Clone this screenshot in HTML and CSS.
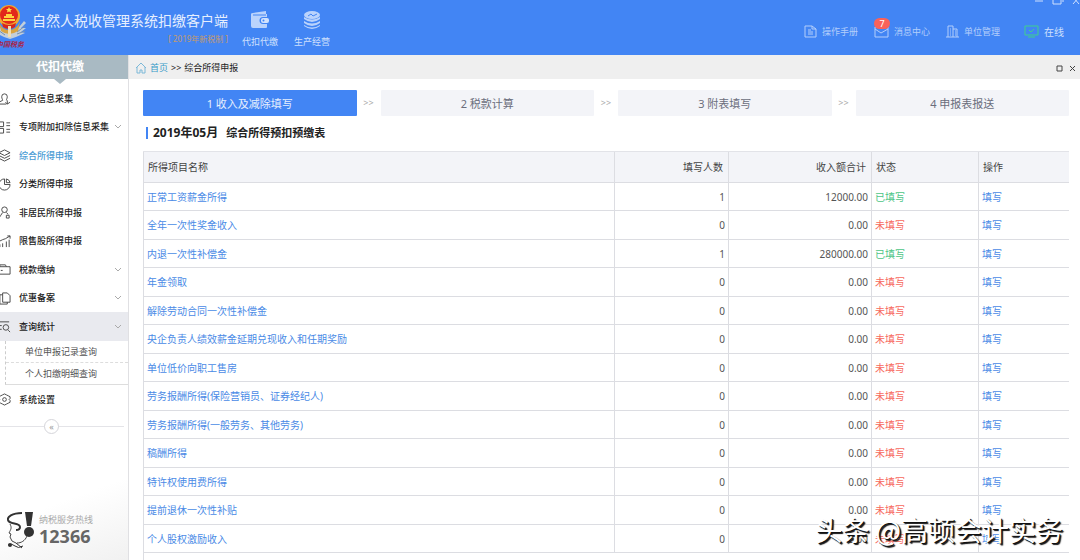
FILE: index.html
```html
<!DOCTYPE html>
<html lang="zh-CN">
<head>
    <meta charset="UTF-8">
    <title>自然人税收管理系统扣缴客户端</title>
    <link rel="stylesheet" href="styles.css">
</head>
<body>
    <header class="topbar">
        <div class="brand">
            <div class="logo">
                <svg width="28" height="37" viewBox="0 0 28 37">
                    <path d="M-2 22 L4 29 L15 29 L24 18 L26 20 L21 25 L26 25 L21 29 L25 30 L16 34 L10 36 L4 34 L-4 30Z" fill="#c3cfda"/>
                    <path d="M17 29l8-6M17 31l8-3M-2 27l7 5" stroke="#7690b0" stroke-width="1"/>
                    <path d="M-1 19q3 8 10 8t11-8l-2 9q-9 6-17 0z" fill="#d9a441"/>
                    <circle cx="9" cy="13" r="11" fill="#f0a830"/>
                    <circle cx="9" cy="12" r="9" fill="#e2281b"/>
                    <path d="M9 4l1 2h2l-1.500 1.500.5 2-2-1-2 1 .5-2L6 6h2z" fill="#ffe04a"/>
                    <path d="M4 15h10v-2h-2v-2H6v2H4zM3 16h12v2H3z" fill="#ffd23f"/>
                    <path d="M2 20q7 4 14 0l-1 4q-6 4-12 0z" fill="#d8251c"/>
                    <path d="M8 23h3v11H8z" fill="#f1ddb0"/>
                </svg>
                <span class="logo-text">中国税务</span>
            </div>
            <div class="brand-name">
                <h1>自然人税收管理系统扣缴客户端</h1>
                <span class="edition">[ 2019年新税制 ]</span>
            </div>
        </div>
        <nav class="modules">
            <a class="module" href="#">
                <svg width="20" height="20" viewBox="0 0 20 20">
                    <path d="M3 3l13-2v3h1v3h-4a3 3 0 0 0 0 7h4v3q0 1-1 1H3q-2 0-2-2V4q0-1 2-1z" fill="#bad3fc"/>
                    <path d="M3 5h13" stroke="#4285f4"/>
                    <rect x="11" y="8" width="8" height="5" rx="2" fill="#d3e3fd"/>
                    <circle cx="13.500" cy="10.500" r="1" fill="#4285f4"/>
                </svg>
                代扣代缴
            </a>
            <a class="module" href="#">
                <svg width="20" height="20" viewBox="0 0 20 20" fill="#bad3fc">
                    <ellipse cx="10" cy="5" rx="8" ry="4"/>
                    <path d="M2 7q8 5 16 0v2q-8 6-16 0zM2 11q8 5 16 0v2q-8 6-16 0zM2 15q8 5 16 0v1q-8 6-16 0z"/>
                    <path d="M6 6l3-2 2 2 4-2" fill="none" stroke="#4285f4"/>
                </svg>
                生产经营
            </a>
        </nav>
        <div class="window-controls">
            <button type="button" aria-label="最小化"><svg width="10" height="8" viewBox="0 0 10 8"><path d="M1 4h8"/></svg></button>
            <button type="button" aria-label="还原"><svg width="12" height="8" viewBox="0 0 12 8"><path d="M1 2h8v5H1zM3 0h8v5"/></svg></button>
            <button type="button" aria-label="关闭"><svg width="8" height="8" viewBox="0 0 8 8"><path d="M1 0l6 7M7 0L1 7"/></svg></button>
        </div>
        <nav class="tools">
            <a href="#">
                <svg width="13" height="13" viewBox="0 0 13 13"><path d="M1 1h7l4 3v8H1zM8 1v3h4M4 5h3M4 7h5M4 9h5"/></svg>
                操作手册
            </a>
            <a class="messages" href="#">
                <svg width="15" height="13" viewBox="0 0 15 13"><path d="M1 2h13v10H1zM1 4l6 4 7-4"/></svg>
                消息中心
                <span class="badge">7</span>
            </a>
            <a href="#">
                <svg width="13" height="13" viewBox="0 0 13 13"><path d="M2 12V1h5v11M7 4h4v8M0 12h13M4 4h1M4 6h1M4 8h1M9 6h1M9 8h1M9 10h1M4 10h1"/></svg>
                单位管理
            </a>
            <a class="online" href="#">
                <svg width="15" height="13" viewBox="0 0 15 13"><path d="M1 1h13v9H1zM4 12h7M5 5l2 2 3-3"/></svg>
                在线
            </a>
        </nav>
    </header>

    <div class="layout">
        <aside class="sidebar">
            <h2 class="sidebar-title">代扣代缴</h2>
            <nav class="menu">
                <a class="menu-item" href="#">
                    <svg class="icon" viewBox="0 0 14 14"><path d="M4 5a3 3 0 0 1 6 0c0 2-1 3-1 4M4 5c0 2 1 3 1 4l-4 2v2h8M10 9v4M8 11l2 2 3-2"/></svg>
                    人员信息采集
                </a>
                <a class="menu-item" href="#">
                    <svg class="icon" viewBox="0 0 14 14"><path d="M1 1h5v5H1zM1 8h5v5H1zM9 2h4M9 5h4M9 9h4M9 12h4"/></svg>
                    专项附加扣除信息采集
                    <svg class="chevron" viewBox="0 0 8 8"><path d="M1 2l3 3 3-3"/></svg>
                </a>
                <a class="menu-item active" href="#">
                    <svg class="icon" viewBox="0 0 14 14"><path d="M7 1l6 3-6 3-6-3zM1 7l6 3 6-3M1 10l6 3 6-3"/></svg>
                    综合所得申报
                </a>
                <a class="menu-item" href="#">
                    <svg class="icon" viewBox="0 0 14 14"><path d="M7 1a6 6 0 1 0 6 6H7zM9 1v4h4a5 5 0 0 0-4-4z"/></svg>
                    分类所得申报
                </a>
                <a class="menu-item" href="#">
                    <svg class="icon" viewBox="0 0 14 14"><circle cx="7" cy="4" r="3"/><path d="M5 7l-2 3-2 3M9 7l2 2M9 10h3v3H9z"/></svg>
                    非居民所得申报
                </a>
                <a class="menu-item" href="#">
                    <svg class="icon" viewBox="0 0 14 14"><path d="M2 13v-3M5 13V9M9 13V7M12 13V5M1 7l4-2 3-1 5-3M10 1h3v3"/></svg>
                    限售股所得申报
                </a>
                <a class="menu-item" href="#">
                    <svg class="icon" viewBox="0 0 14 14"><path d="M1 4h12v8H1zM2 4V2h6l1 2M3 8h2"/></svg>
                    税款缴纳
                    <svg class="chevron" viewBox="0 0 8 8"><path d="M1 2l3 3 3-3"/></svg>
                </a>
                <a class="menu-item" href="#">
                    <svg class="icon" viewBox="0 0 14 14"><path d="M5 1h5l3 3v7H5zM5 3H2v10h8v-2"/></svg>
                    优惠备案
                    <svg class="chevron" viewBox="0 0 8 8"><path d="M1 2l3 3 3-3"/></svg>
                </a>
                <a class="menu-item open" href="#">
                    <svg class="icon" viewBox="0 0 14 14"><path d="M1 2h11M1 6h3M1 10h3M11 11l2 2"/><circle cx="8.500" cy="8" r="3"/></svg>
                    查询统计
                    <svg class="chevron" viewBox="0 0 8 8"><path d="M1 2l3 3 3-3"/></svg>
                </a>
                <div class="submenu">
                    <a href="#">单位申报记录查询</a>
                    <a href="#">个人扣缴明细查询</a>
                </div>
                <a class="menu-item" href="#">
                    <svg class="icon" viewBox="0 0 14 14"><path d="M5 2l2-1 2 1 2 1 2 1v2l-1 1 1 1v2l-2 1-2 1-2 1-2-1-2-1-2-1V8l1-1-1-1V4l2-1z"/><circle cx="7" cy="7" r="2"/></svg>
                    系统设置
                </a>
            </nav>
            <div class="collapse">
                <button type="button" aria-label="收起菜单">«</button>
            </div>
            <div class="hotline">
                <svg width="28" height="38" viewBox="0 0 28 38">
                    <path d="M18 1h8l-2 14h-4z" fill="#333"/>
                    <circle cx="22" cy="21" r="5" fill="#333"/>
                    <path d="M15 2C5 2 0 6 1 9c1 5 12 2 12 7 0 2-2 3-4 3" fill="none" stroke="#333" stroke-width="2"/>
                    <path d="M3 13c2 4 1 5-1 9l2 1-1 3 2 4 4 2M20 25c-2 5-6 7-10 7" fill="none" stroke="#444" stroke-width="1"/>
                    <path d="M1 34q4-2 7 1t8 0M9 32l6 5" fill="none" stroke="#333" stroke-width="1"/>
                    <circle cx="3" cy="34" r="2" fill="#333"/>
                </svg>
                <div>
                    <div class="hotline-label">纳税服务热线</div>
                    <div class="hotline-number">12366</div>
                </div>
            </div>
        </aside>

        <div class="content">
            <div class="crumbs">
                <svg width="12" height="12" viewBox="0 0 12 12"><path d="M1 6l5-5 5 5M2 5v6h3V8h2v3h3V5" fill="none" stroke="#7db9d8"/></svg>
                <a href="#">首页</a>
                <span>&gt;&gt;</span>
                <span>综合所得申报</span>
                <div class="tab-controls">
                    <button type="button" aria-label="最大化"><svg width="7" height="7" viewBox="0 0 7 7"><path d="M1 1h5v5H1z"/></svg></button>
                    <button type="button" aria-label="关闭页面"><svg width="7" height="7" viewBox="0 0 7 7"><path d="M1 1l5 5M6 1L1 6"/></svg></button>
                </div>
            </div>

            <main class="main">
                <div class="steps">
                    <button type="button" class="step current">1 收入及减除填写</button>
                    <span class="arrow">&gt;&gt;</span>
                    <button type="button" class="step">2 税款计算</button>
                    <span class="arrow">&gt;&gt;</span>
                    <button type="button" class="step">3 附表填写</button>
                    <span class="arrow">&gt;&gt;</span>
                    <button type="button" class="step">4 申报表报送</button>
                </div>

                <h3 class="report-title"><span class="period">2019年05月</span><span>综合所得预扣预缴表</span></h3>

                <table class="report">
                    <thead>
                        <tr>
                            <th>所得项目名称</th>
                            <th class="col-count">填写人数</th>
                            <th class="col-sum">收入额合计</th>
                            <th class="col-status">状态</th>
                            <th class="col-action">操作</th>
                        </tr>
                    </thead>
                    <tbody>
                        <tr><td><a href="#">正常工资薪金所得</a></td><td>1</td><td>12000.00</td><td class="done">已填写</td><td><a href="#">填写</a></td></tr>
                        <tr><td><a href="#">全年一次性奖金收入</a></td><td>0</td><td>0.00</td><td class="todo">未填写</td><td><a href="#">填写</a></td></tr>
                        <tr><td><a href="#">内退一次性补偿金</a></td><td>1</td><td>280000.00</td><td class="done">已填写</td><td><a href="#">填写</a></td></tr>
                        <tr><td><a href="#">年金领取</a></td><td>0</td><td>0.00</td><td class="todo">未填写</td><td><a href="#">填写</a></td></tr>
                        <tr><td><a href="#">解除劳动合同一次性补偿金</a></td><td>0</td><td>0.00</td><td class="todo">未填写</td><td><a href="#">填写</a></td></tr>
                        <tr><td><a href="#">央企负责人绩效薪金延期兑现收入和任期奖励</a></td><td>0</td><td>0.00</td><td class="todo">未填写</td><td><a href="#">填写</a></td></tr>
                        <tr><td><a href="#">单位低价向职工售房</a></td><td>0</td><td>0.00</td><td class="todo">未填写</td><td><a href="#">填写</a></td></tr>
                        <tr><td><a href="#">劳务报酬所得(保险营销员、证券经纪人)</a></td><td>0</td><td>0.00</td><td class="todo">未填写</td><td><a href="#">填写</a></td></tr>
                        <tr><td><a href="#">劳务报酬所得(一般劳务、其他劳务)</a></td><td>0</td><td>0.00</td><td class="todo">未填写</td><td><a href="#">填写</a></td></tr>
                        <tr><td><a href="#">稿酬所得</a></td><td>0</td><td>0.00</td><td class="todo">未填写</td><td><a href="#">填写</a></td></tr>
                        <tr><td><a href="#">特许权使用费所得</a></td><td>0</td><td>0.00</td><td class="todo">未填写</td><td><a href="#">填写</a></td></tr>
                        <tr><td><a href="#">提前退休一次性补贴</a></td><td>0</td><td>0.00</td><td class="todo">未填写</td><td><a href="#">填写</a></td></tr>
                        <tr><td><a href="#">个人股权激励收入</a></td><td>0</td><td>0.00</td><td class="todo">未填写</td><td><a href="#">填写</a></td></tr>
                    </tbody>
                </table>
                <div class="report-rest"></div>
            </main>
        </div>
    </div>

    <div class="watermark">头条 @高顿会计实务</div>
</body>
</html>
```

FILE: styles.css
```css
* {
    box-sizing: border-box;
}
body {
    margin: 0;
    min-height: 100vh;
    display: flex;
    flex-direction: column;
    position: relative;
    font-family: "Noto Sans", "Noto Sans CJK SC", sans-serif;
    font-size: 10px;
    line-height: 14px;
    color: #555;
    background-color: #fff;
}
h1, h2, h3 {
    margin: 0;
    font-weight: normal;
}
a {
    color: #4a8ae6;
    text-decoration: none;
}
button {
    font-family: inherit;
    border: none;
    padding: 0;
    background: none;
    cursor: pointer;
}
svg {
    display: block;
    flex: none;
}

/* top bar */
.topbar {
    display: flex;
    height: 55px;
    position: relative;
    overflow: hidden;
    background-color: #4285f4;
    color: #dbe8fd;
}
.brand {
    display: flex;
}
.logo {
    width: 32px;
    padding-top: 3px;
}
.logo-text {
    display: block;
    margin-left: -4px;
    font-size: 7px;
    line-height: 10px;
    font-weight: bold;
    font-style: italic;
    white-space: nowrap;
    color: #a8264a;
}
.brand-name {
    display: flex;
    flex-direction: column;
    padding-top: 11px;
}
.brand-name h1 {
    font-size: 14px;
    line-height: 20px;
    color: #e6effe;
}
.edition {
    align-self: flex-end;
    font-size: 8px;
    line-height: 16px;
    color: #c49a6c;
}
.modules {
    display: flex;
    gap: 16px;
    margin-left: 14px;
    padding-top: 10px;
}
.module {
    display: flex;
    flex-direction: column;
    align-items: center;
    gap: 5px;
    font-size: 9px;
    color: #cfe0fd;
}
.window-controls {
    position: absolute;
    top: -3px;
    right: 0;
    display: flex;
    gap: 8px;
}
.window-controls svg {
    fill: none;
    stroke: #cfe0fd;
}
.tools {
    display: flex;
    align-items: center;
    gap: 16px;
    margin-left: auto;
    padding: 8px 16px 0 0;
    font-size: 9px;
}
.tools a {
    display: flex;
    align-items: center;
    gap: 5px;
    position: relative;
    color: #b3cefb;
}
.tools svg {
    fill: none;
    stroke: #b3cefb;
}
.tools .online {
    margin-left: 8px;
    font-size: 10px;
    color: #cfe0fd;
}
.tools .online svg {
    stroke: #3fd08c;
}
.badge {
    position: absolute;
    top: -7px;
    left: 0;
    width: 16px;
    height: 11px;
    border-radius: 6px;
    background-color: #f9625a;
    color: #fff;
    font-size: 9px;
    line-height: 11px;
    text-align: center;
}

.layout {
    display: flex;
    flex: 1;
}

/* sidebar */
.sidebar {
    display: flex;
    flex-direction: column;
    flex: none;
    width: 129px;
    overflow: hidden;
    border-right: 1px solid #e0e0e3;
    background: linear-gradient(160deg, #fff 85%, #f1f1f1);
}
.sidebar-title {
    position: relative;
    height: 24px;
    padding-right: 8px;
    background-color: #a9bac3;
    color: #fff;
    font-size: 12px;
    line-height: 24px;
    font-weight: bold;
    text-align: center;
}
.sidebar-title::after {
    content: "";
    position: absolute;
    top: 24px;
    left: 54px;
    border: 6px solid transparent;
    border-top: 5px solid #a9bac3;
    border-bottom: none;
}
.menu {
    padding-top: 5px;
}
.menu-item {
    display: flex;
    align-items: center;
    height: 29px;
    padding-right: 6px;
    color: #222;
    font-size: 9px;
    font-weight: 500;
}
.menu-item:nth-child(even) {
    height: 28px;
}
.menu-item.active {
    color: #4a9bd4;
}
.menu-item.open {
    background-color: #e9eaef;
}
.icon {
    width: 13px;
    height: 13px;
    margin-left: -2px;
    margin-right: 8px;
    fill: none;
    stroke: #444;
}
.chevron {
    width: 8px;
    height: 8px;
    margin-left: auto;
    fill: none;
    stroke: #aaa;
}
.submenu {
    margin-left: 5px;
    border-left: 1px dashed #ccc;
    border-bottom: 1px solid #ddd;
}
.submenu a {
    display: block;
    padding-left: 19px;
    font-size: 9px;
    line-height: 21px;
    color: #555;
}
.submenu a + a {
    border-top: 1px dashed #ddd;
}
.collapse {
    display: flex;
    align-items: center;
    justify-content: center;
    margin: 5px 4px 0 0;
    padding-right: 21px;
    background: linear-gradient(#e4e4e8, #e4e4e8) center / 100% 1px no-repeat;
}
.collapse button {
    width: 15px;
    height: 15px;
    border: 1px solid #d5d5da;
    border-radius: 50%;
    background-color: #fff;
    color: #999;
    font-size: 9px;
    line-height: 12px;
}
.hotline {
    display: flex;
    align-items: center;
    gap: 4px;
    margin-top: auto;
    padding: 0 0 11px 7px;
}
.hotline-label {
    font-size: 9px;
    line-height: 12px;
    color: #aaa;
}
.hotline-number {
    font-size: 18px;
    line-height: 20px;
    font-weight: bold;
    color: #666;
}

/* content */
.content {
    display: flex;
    flex-direction: column;
    flex: 1;
    min-width: 0;
}
.crumbs {
    display: flex;
    align-items: center;
    gap: 3px;
    height: 24px;
    padding: 2px 4px 0 6px;
    background-color: #efefef;
    color: #222;
    font-size: 9px;
}
.crumbs a {
    color: #3a9bc8;
}
.tab-controls {
    display: flex;
    gap: 6px;
    margin-left: auto;
}
.tab-controls svg {
    fill: none;
    stroke: #444;
}
.main {
    display: flex;
    flex-direction: column;
    flex: 1;
    padding: 11px 11px 0 14px;
}
.steps {
    display: flex;
    align-items: center;
}
.step {
    flex: 1;
    height: 26px;
    border-radius: 1px;
    background-color: #f3f4f8;
    color: #6b6e7c;
    font-size: 11px;
}
.step.current {
    background-color: #4285f4;
    color: #e6effe;
}
.arrow {
    width: 24px;
    font-size: 9px;
    text-align: center;
    color: #aaa;
}
.report-title {
    display: flex;
    gap: 8px;
    margin: 11px 0 12px 3px;
    padding-left: 5px;
    border-left: 2px solid #4285f4;
    color: #222;
    font-size: 11px;
    line-height: 12px;
    font-weight: bold;
}
.period {
    font-size: 12px;
}
.report {
    width: 100%;
    table-layout: fixed;
    border-collapse: separate;
    border-spacing: 0;
    border-top: 1px solid #e2e3e8;
}
.report th, .report td {
    padding: 0 3px;
    border-left: 1px solid #dcdde2;
    border-bottom: 1px solid #dcdde2;
    font-weight: normal;
    text-align: left;
}
.report th {
    height: 31px;
    padding: 0 4px;
    background-color: #f3f4f8;
    color: #444;
}
.report td {
    height: 28px;
}
.report tr:nth-child(even) td {
    height: 29px;
}
.report th:nth-child(2), .report th:nth-child(3),
.report td:nth-child(2), .report td:nth-child(3) {
    text-align: right;
}
.report th:nth-child(2), .report th:nth-child(3) {
    padding-right: 5px;
}
.col-count {
    width: 114px;
}
.col-sum {
    width: 143px;
}
.col-status {
    width: 107px;
}
.col-action {
    width: 91px;
}
.report .done {
    color: #4cc585;
}
.report .todo {
    color: #f7685d;
}
.report-rest {
    flex: 1;
    border-left: 1px solid #dcdde2;
}

.watermark {
    position: absolute;
    right: 17px;
    bottom: 10px;
    color: #fff;
    font-family: "Noto Sans CJK SC", sans-serif;
    font-size: 27px;
    line-height: 40px;
    text-shadow: 1px 1px 0 #111, 2px 2px 1px #111;
}
```
